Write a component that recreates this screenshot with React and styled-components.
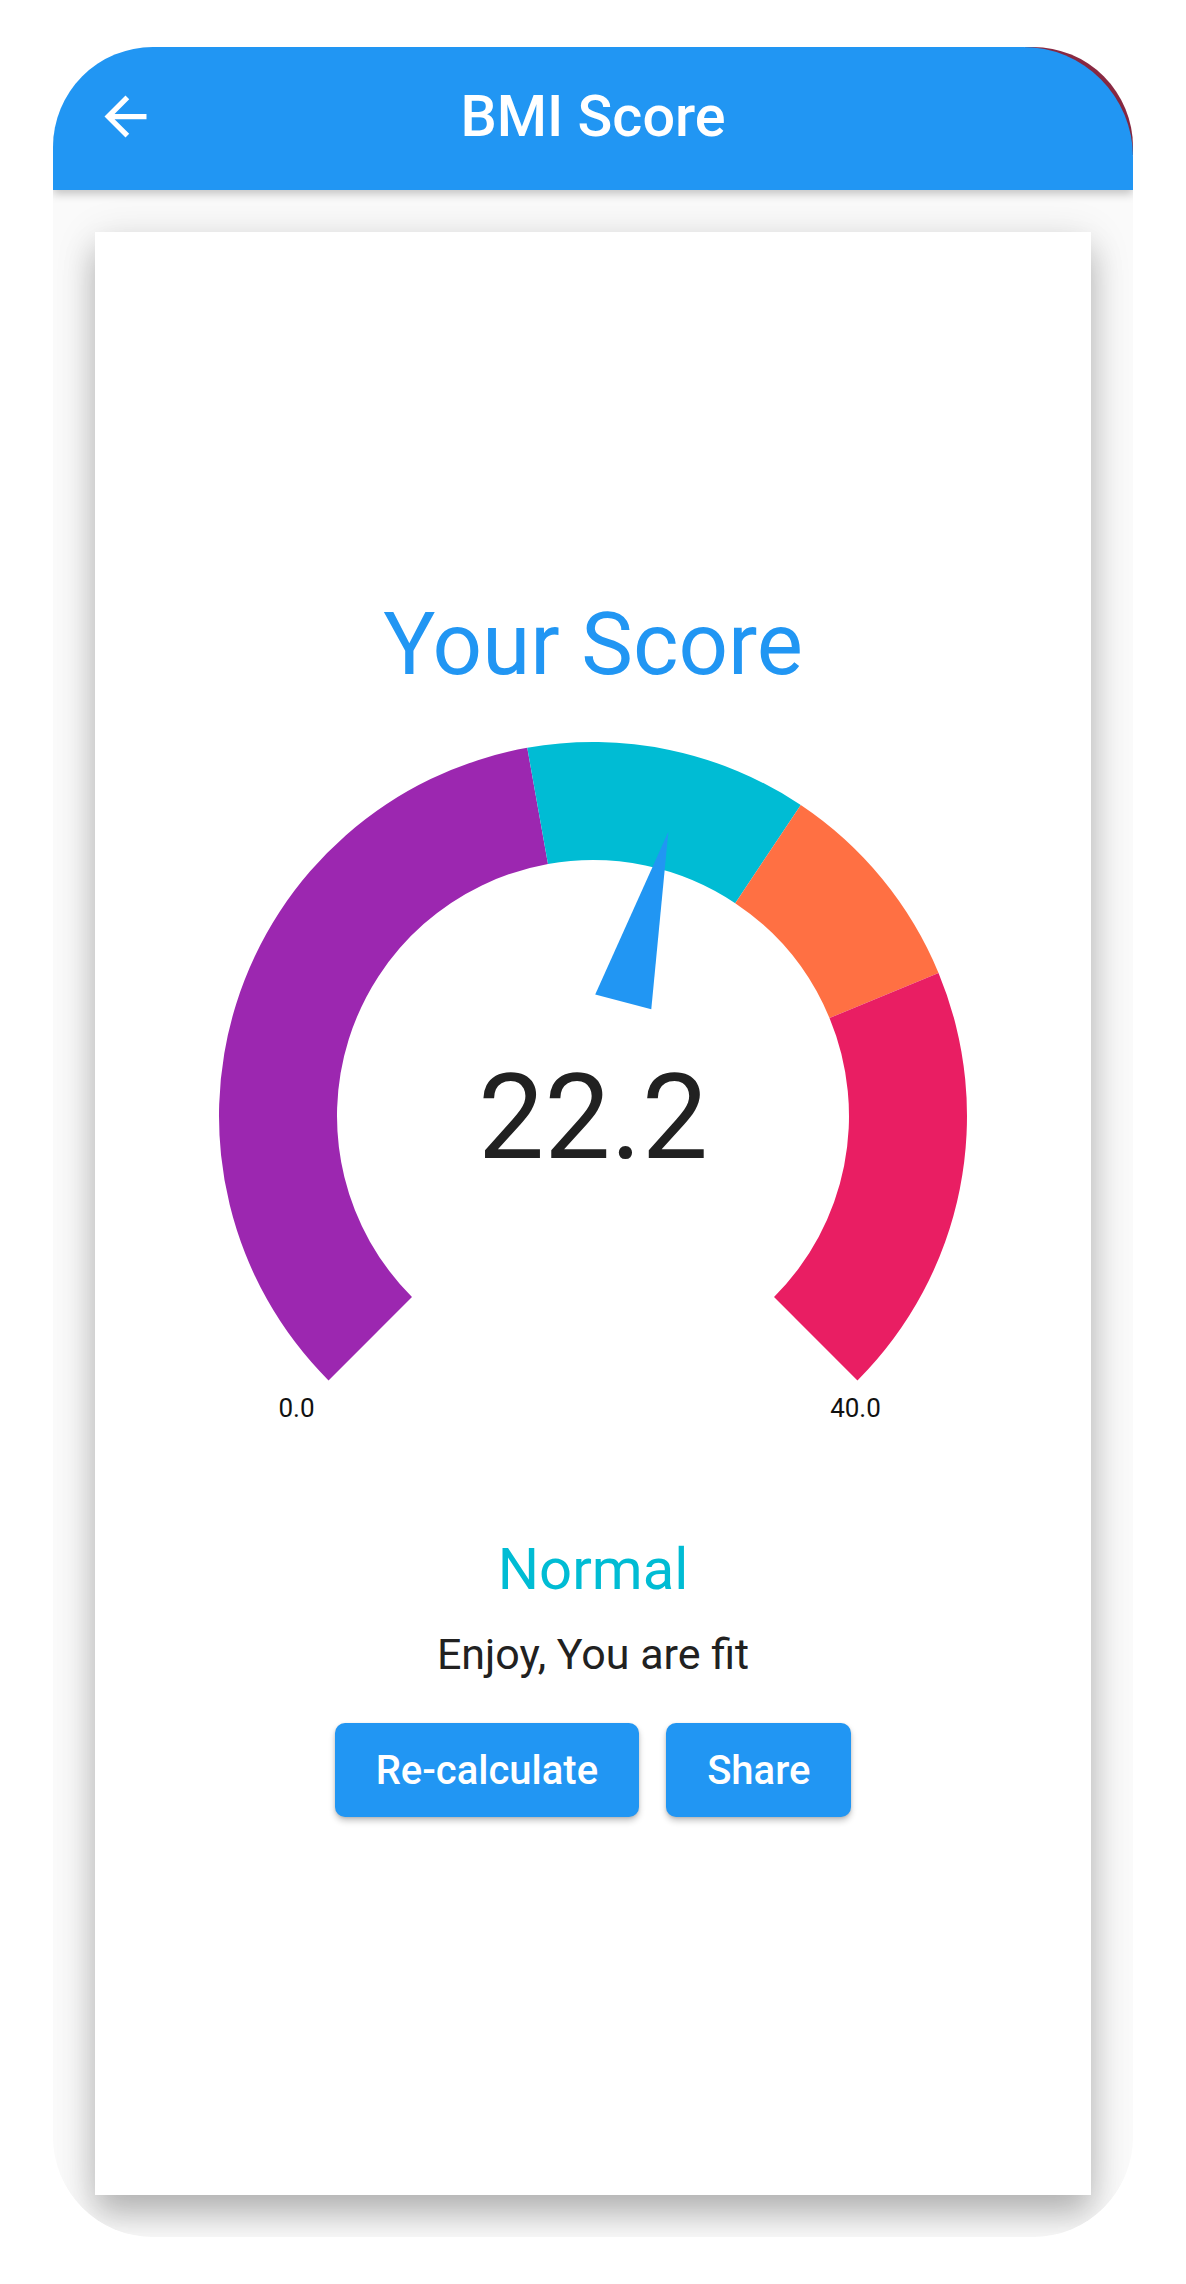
import React from "react";
import styled, { createGlobalStyle } from "styled-components";

const GlobalStyle = createGlobalStyle`
  html, body {
    margin: 0;
    padding: 0;
    background: #ffffff;
  }
  body {
    font-family: Roboto, "Noto Sans", "Liberation Sans", sans-serif;
  }
`;

const Page = styled.div`
  padding: 47px 0 0 53px;
`;

const PhoneFrame = styled.div`
  position: relative;
  width: 1080px;
  height: 2190px;
  border-radius: 100px;
  overflow: hidden;
  background: #fafafa;
  display: flex;
  flex-direction: column;
`;

/* debug ribbon peeking out behind the app bar corner */
const CornerRibbon = styled.div`
  position: absolute;
  top: 0;
  right: 0;
  width: 160px;
  height: 160px;
  z-index: 1;
  background: linear-gradient(
    225deg,
    transparent 0 12%,
    #8c2a44 12% 34%,
    transparent 34%
  );
`;

const AppBar = styled.header`
  position: relative;
  z-index: 2;
  height: 143px;
  flex-shrink: 0;
  background: #2196f3;
  border-top-right-radius: 110px;
  box-shadow: 0 4px 10px rgba(0, 0, 0, 0.22);
  display: grid;
  grid-template-columns: 1fr auto 1fr;
  align-items: center;
  padding-bottom: 4px;
  box-sizing: border-box;
`;

const BackButton = styled.button`
  justify-self: start;
  margin-left: 41px;
  width: 63px;
  height: 63px;
  padding: 0;
  border: none;
  background: transparent;
  color: #ffffff;
  display: flex;
  cursor: pointer;
`;

const Title = styled.h1`
  margin: 0;
  font-size: 57.5px;
  font-weight: 500;
  color: #ffffff;
  line-height: 1.2;
`;

const Body = styled.main`
  flex: 1;
  padding: 42px;
  display: flex;
`;

const Card = styled.section`
  flex: 1;
  background: #ffffff;
  box-shadow: 0 20px 30px rgba(0, 0, 0, 0.22), 0 6px 40px rgba(0, 0, 0, 0.12);
  display: flex;
  flex-direction: column;
  align-items: center;
  padding-top: 361px;
`;

const Heading = styled.h2`
  margin: 0;
  font-size: 87px;
  font-weight: 400;
  line-height: 1.185;
  color: #2196f3;
`;

const GaugeWrap = styled.div`
  position: relative;
  width: 800px;
  height: 740px;
`;

const GaugeValue = styled.div`
  position: absolute;
  left: 0;
  right: 0;
  top: 363px;
  text-align: center;
  font-size: 118px;
  line-height: 1;
  color: #212121;
`;

const Category = styled.div`
  margin-top: 100px;
  font-size: 58px;
  line-height: 1.172;
  color: ${({ tone }) => tone};
`;

const Message = styled.p`
  margin: 26px 0 0;
  font-size: 43px;
  line-height: 1.14;
  color: #212121;
`;

const Actions = styled.div`
  display: flex;
  gap: 27px;
  margin-top: 44px;
`;

const ActionButton = styled.button`
  height: 94px;
  padding: 0 41px;
  border: none;
  border-radius: 10px;
  background: #2196f3;
  color: #ffffff;
  font-family: Roboto, "Liberation Sans", sans-serif;
  font-size: 40px;
  font-weight: 500;
  box-shadow: 0 4px 6px rgba(0, 0, 0, 0.22), 0 1px 3px rgba(0, 0, 0, 0.12);
  cursor: pointer;
`;

const CX = 400;
const CY = 420;
const R_OUT = 374;
const R_IN = 256;
const MAX = 40;

const ranges = [
  { from: 0, to: 18.5, color: "#9c27b0" },
  { from: 18.5, to: 25, color: "#00bcd4" },
  { from: 25, to: 30, color: "#ff7043" },
  { from: 30, to: 40, color: "#e91e63" },
];

const angleOf = (v) => ((135 + (v / MAX) * 270) * Math.PI) / 180;
const pt = (r, a) => [CX + r * Math.cos(a), CY + r * Math.sin(a)];

function arcPath(from, to) {
  const a0 = angleOf(from);
  const a1 = angleOf(to);
  const large = a1 - a0 > Math.PI ? 1 : 0;
  const [x0, y0] = pt(R_OUT, a0);
  const [x1, y1] = pt(R_OUT, a1);
  const [x2, y2] = pt(R_IN, a1);
  const [x3, y3] = pt(R_IN, a0);
  return `M${x0} ${y0} A${R_OUT} ${R_OUT} 0 ${large} 1 ${x1} ${y1} L${x2} ${y2} A${R_IN} ${R_IN} 0 ${large} 0 ${x3} ${y3} Z`;
}

function needlePoints(value) {
  const a = angleOf(value);
  const dx = Math.cos(a);
  const dy = Math.sin(a);
  const px = -dy;
  const py = dx;
  const mx = CX + 118 * dx;
  const my = CY + 118 * dy;
  const tip = [CX + 294 * dx, CY + 294 * dy];
  const b1 = [mx - 29 * px, my - 29 * py];
  const b2 = [mx + 29 * px, my + 29 * py];
  return [b1, b2, tip].map((p) => p.join(",")).join(" ");
}

function Gauge({ value }) {
  return (
    <GaugeWrap>
      <svg width="800" height="740" viewBox="0 0 800 740">
        {ranges.map((r) => (
          <path key={r.from} d={arcPath(r.from, r.to)} fill={r.color} />
        ))}
        <polygon points={needlePoints(value)} fill="#2196f3" />
        <g fontFamily="Roboto, 'Liberation Sans', sans-serif" fontSize="26" fill="#111" textAnchor="middle">
          <text x="103.5" y="721">0.0</text>
          <text x="662.5" y="721">40.0</text>
        </g>
      </svg>
      <GaugeValue>{value.toFixed(1)}</GaugeValue>
    </GaugeWrap>
  );
}

export default function App() {
  return (
    <>
      <GlobalStyle />
      <Page>
        <PhoneFrame>
          <CornerRibbon />
          <AppBar>
            <BackButton aria-label="Back">
              <svg width="63" height="63" viewBox="0 0 24 24" fill="currentColor">
                <path d="M20 11H7.83l5.59-5.59L12 4l-8 8 8 8 1.41-1.41L7.83 13H20v-2z" />
              </svg>
            </BackButton>
            <Title>BMI Score</Title>
            <span />
          </AppBar>
          <Body>
            <Card>
              <Heading>Your Score</Heading>
              <Gauge value={22.2} />
              <Category tone="#00bcd4">Normal</Category>
              <Message>Enjoy, You are fit</Message>
              <Actions>
                <ActionButton>Re-calculate</ActionButton>
                <ActionButton>Share</ActionButton>
              </Actions>
            </Card>
          </Body>
        </PhoneFrame>
      </Page>
    </>
  );
}
